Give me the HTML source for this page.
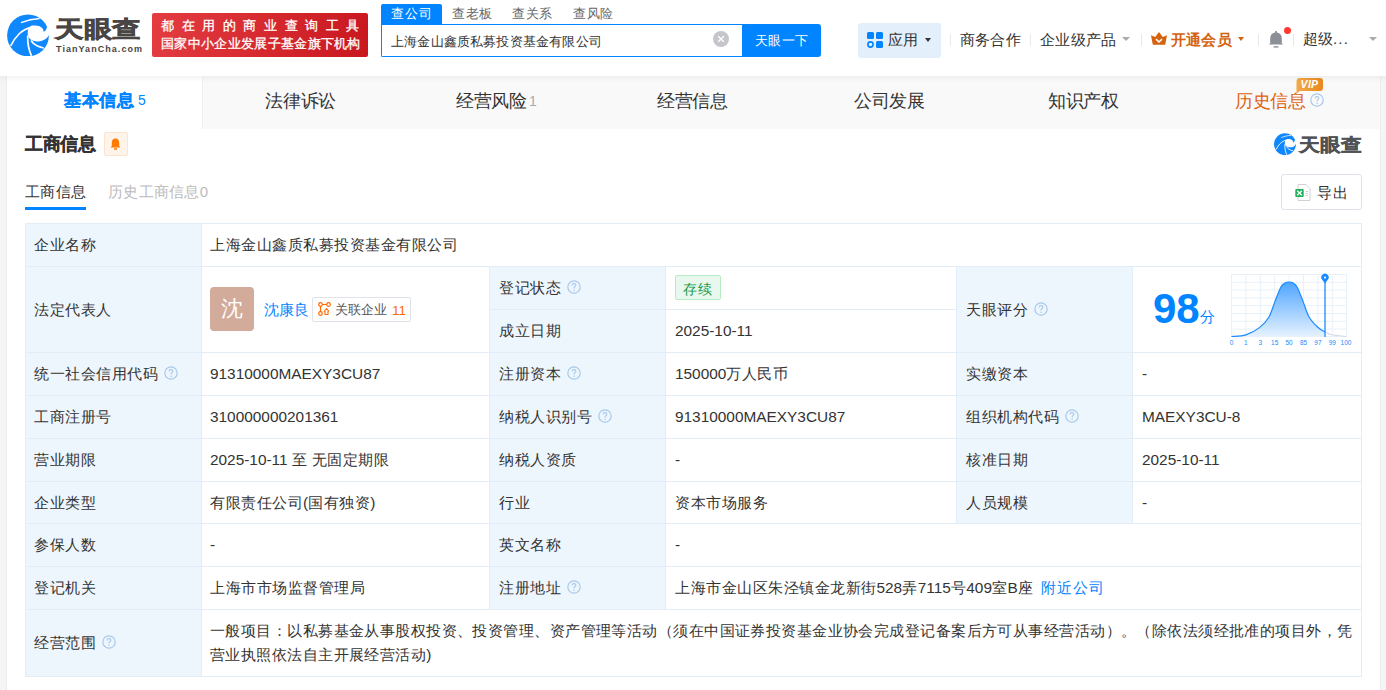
<!DOCTYPE html>
<html><head><meta charset="utf-8">
<style>
*{box-sizing:border-box;margin:0;padding:0}
html,body{width:1386px;height:690px;overflow:hidden;background:#f5f5f5;font-family:"Liberation Sans",sans-serif;color:#333}
.a{position:absolute;white-space:nowrap}
.l{letter-spacing:0}
.t15 .l{font-size:15.4px}
#hdr{position:absolute;left:0;top:0;width:1386px;height:76px;background:#fff;box-shadow:0 2px 5px rgba(0,0,0,.06);z-index:5}
</style></head><body>
<div class="a" style="left:7px;top:76px;width:1373px;height:614px;background:#fff;"></div>
<div class="a" style="left:6px;top:76px;width:1px;height:614px;background:#ececec;"></div>
<div class="a" style="left:1380px;top:76px;width:1px;height:614px;background:#ececec;"></div>
<div class="a" style="left:7px;top:76px;width:1373px;height:53px;background:#f9f9f9;"></div>
<div class="a" style="left:7px;top:76px;width:195px;height:53px;background:#fff;"></div>
<div class="a" style="left:202px;top:76px;width:1px;height:53px;background:#efefef;"></div>
<div class="a" style="left:64px;top:91px;font-size:17px;line-height:20px;color:#0084ff;font-weight:bold;letter-spacing:0.55px;-webkit-text-stroke:0.3px #0084ff">基本信息</div>
<div class="a" style="left:138px;top:90px;font-size:14px;line-height:20px;color:#0084ff;">5</div>
<div class="a" style="left:265px;top:91px;font-size:18px;line-height:20px;color:#333;letter-spacing:-0.2px;">法律诉讼</div>
<div class="a" style="left:456px;top:91px;font-size:18px;line-height:20px;color:#333;letter-spacing:-0.4px;">经营风险</div>
<div class="a" style="left:529px;top:91px;font-size:14px;line-height:20px;color:#aaa;">1</div>
<div class="a" style="left:657px;top:91px;font-size:18px;line-height:20px;color:#333;letter-spacing:-0.4px;">经营信息</div>
<div class="a" style="left:854px;top:91px;font-size:18px;line-height:20px;color:#333;letter-spacing:-0.4px;">公司发展</div>
<div class="a" style="left:1048px;top:91px;font-size:18px;line-height:20px;color:#333;letter-spacing:-0.3px;">知识产权</div>
<div class="a" style="left:1235px;top:91px;font-size:18px;line-height:20px;color:#e0620e;letter-spacing:-0.3px;">历史信息</div>
<svg class="a" style="left:1310px;top:93px" width="14" height="14" viewBox="0 0 14 14"><circle cx="7" cy="7" r="6.2" fill="none" stroke="#a8c9eb" stroke-width="1.2"/><path d="M5.1 5.4 C5.1 4.2 6 3.6 7 3.6 C8.1 3.6 8.9 4.3 8.9 5.3 C8.9 6.5 7.1 6.6 7.1 8 V8.4" fill="none" stroke="#a8c9eb" stroke-width="1.1"/><circle cx="7.1" cy="10.2" r="0.75" fill="#a8c9eb"/></svg>
<svg class="a" style="left:1296px;top:78px" width="28" height="16" viewBox="0 0 28 16"><defs><linearGradient id="vg" x1="0" y1="0" x2="1" y2="0"><stop offset="0" stop-color="#f3aa48"/><stop offset="1" stop-color="#e8881f"/></linearGradient></defs><path d="M3 0 H24 A3 3 0 0 1 27 3 V10 A3 3 0 0 1 24 13 H4 L0.5 15.5 L0.5 3 A3 3 0 0 1 3 0 Z" fill="url(#vg)"/></svg>
<div class="a" style="left:1296px;top:78px;width:27px;font-size:10.5px;line-height:13px;font-weight:bold;font-style:italic;color:#fff;text-align:center;letter-spacing:0.3px">VIP</div>
<div class="a" style="left:25px;top:134px;font-size:18px;line-height:20px;color:#333;font-weight:bold;letter-spacing:-0.3px;-webkit-text-stroke:0.3px #333">工商信息</div>
<div class="a" style="left:104px;top:132px;width:24px;height:24px;background:#fff4ea;border:1px solid #fde4cf;border-radius:2px"></div>
<svg class="a" style="left:110px;top:138px" width="11" height="12" viewBox="0 0 11 12"><path d="M5.5 0.5 C2.8 0.5 1.8 2.5 1.8 5 L1.8 8 L0.5 9.5 L10.5 9.5 L9.2 8 L9.2 5 C9.2 2.5 8.2 0.5 5.5 0.5Z" fill="#ff7a00"/><rect x="4" y="10.2" width="3" height="1.5" fill="#ff7a00"/></svg>
<svg class="a" style="left:1274px;top:133px" width="22" height="22" viewBox="0 0 42 42"><circle cx="21" cy="21.4" r="20.9" fill="#0f87fd"/>
<path d="M21.9 13.3 C23.5 12 25 11.6 26.5 11.6 C29 11.5 31 11.7 32.5 12.3 C34.5 13.2 35.9 14.5 36.3 16 C36.6 16.8 36.6 17.4 36.5 17.8 L38 17.9 L42.2 19.6 L42.2 20.6 C40.8 23 39.6 24.6 37.7 25.6 C35.8 26.7 33.8 27.4 31.6 27.4 C29.6 27.5 27.8 27.3 26.2 26.8 C24.8 26.3 23.9 25.7 23.1 25 C22.2 24.2 21.6 23.4 21.3 22.5 C20.8 21.2 20.6 19.8 20.7 18.3 C20.8 16.5 21.2 14.6 21.9 13.3 Z" fill="#fff"/>
<path d="M14 8.7 C20 6.3 26 4.8 32.6 4.5" stroke="#fff" stroke-width="1.4" fill="none"/>
<path d="M3.7 31.8 C6 27 9 23 12 20 C15.5 16.6 19 14.6 23.2 13.6" stroke="#fff" stroke-width="1.7" fill="none"/>
<path d="M20.7 21.5 C20.6 26 20.9 30 21.6 33 C22.3 36.5 23.2 39 24.5 41.8" stroke="#fff" stroke-width="1.7" fill="none"/>
<path d="M24 26.5 C25.5 28.8 27.5 30.6 30 31.8 C32 32.8 34 33.6 36.8 34" stroke="#fff" stroke-width="1.7" fill="none"/>
<path d="M40.3 12.2 C39.6 14.5 39 16 38 17.1 C37.5 17.6 37 17.9 36.5 18 L42.3 20 L42.3 12.2 Z" fill="#fff"/></svg>
<div class="a" style="left:1299px;top:135px;font-size:18px;line-height:20px;color:#505256;font-weight:bold;-webkit-text-stroke:0.4px #505256;transform:scaleX(1.155);transform-origin:0 0">天眼查</div>
<div class="a" style="left:25px;top:182px;font-size:15px;line-height:20px;color:#333;letter-spacing:0.3px;">工商信息</div>
<div class="a" style="left:25px;top:207px;width:61px;height:3px;background:#0084ff;"></div>
<div class="a" style="left:108px;top:182px;font-size:15px;line-height:20px;color:#bbb;letter-spacing:0.3px;">历史工商信息<span class="l">0</span></div>
<div class="a" style="left:1281px;top:174px;width:81px;height:36px;background:#fff;border:1px solid #dfe3ea;border-radius:3px"></div>
<svg class="a" style="left:1295px;top:184px" width="16" height="17" viewBox="0 0 16 17"><path d="M3 0.5 L11 0.5 L15 4.5 L15 16.5 L3 16.5 Z" fill="#fff" stroke="#cfd3d8"/><rect x="0.3" y="5" width="8.4" height="8" rx="1" fill="#21b05a"/><path d="M2.2 6.8 L6.8 11.2 M6.8 6.8 L2.2 11.2" stroke="#fff" stroke-width="1.3"/><path d="M10.5 7.5h2.5M10.5 9.5h2.5M10.5 11.5h2.5" stroke="#cfd3d8"/></svg>
<div class="a" style="left:1317px;top:183px;font-size:15px;line-height:20px;color:#333;letter-spacing:1px;">导出</div>
<div class="a" style="left:25px;top:223px;width:176px;height:43px;background:#eef6fd;"></div>
<div class="a t15" style="left:34px;top:235px;font-size:15px;line-height:20px;color:#333;letter-spacing:0.5px;">企业名称</div>
<div class="a" style="left:201px;top:223px;width:1160px;height:43px;background:#fff;"></div>
<div class="a t15" style="left:210px;top:235px;font-size:15px;line-height:20px;color:#333;letter-spacing:0.5px;">上海金山鑫质私募投资基金有限公司</div>
<div class="a" style="left:25px;top:266px;width:176px;height:86px;background:#eef6fd;"></div>
<div class="a t15" style="left:34px;top:300px;font-size:15px;line-height:20px;color:#333;letter-spacing:0.5px;">法定代表人</div>
<div class="a" style="left:201px;top:266px;width:288px;height:86px;background:#fff;"></div>
<div class="a" style="left:489px;top:266px;width:176px;height:43px;background:#eef6fd;"></div>
<div class="a t15" style="left:499px;top:278px;font-size:15px;line-height:20px;color:#333;letter-spacing:0.5px;">登记状态</div>
<svg class="a" style="left:567px;top:280px" width="14" height="14" viewBox="0 0 14 14"><circle cx="7" cy="7" r="6.2" fill="none" stroke="#a8c9eb" stroke-width="1.2"/><path d="M5.1 5.4 C5.1 4.2 6 3.6 7 3.6 C8.1 3.6 8.9 4.3 8.9 5.3 C8.9 6.5 7.1 6.6 7.1 8 V8.4" fill="none" stroke="#a8c9eb" stroke-width="1.1"/><circle cx="7.1" cy="10.2" r="0.75" fill="#a8c9eb"/></svg>
<div class="a" style="left:665px;top:266px;width:291px;height:43px;background:#fff;"></div>
<div class="a" style="left:489px;top:309px;width:176px;height:43px;background:#eef6fd;"></div>
<div class="a t15" style="left:499px;top:321px;font-size:15px;line-height:20px;color:#333;letter-spacing:0.5px;">成立日期</div>
<div class="a" style="left:665px;top:309px;width:291px;height:43px;background:#fff;"></div>
<div class="a t15" style="left:675px;top:321px;font-size:15px;line-height:20px;color:#333;letter-spacing:0.5px;"><span class="l">2025-10-11</span></div>
<div class="a" style="left:956px;top:266px;width:176px;height:86px;background:#eef6fd;"></div>
<div class="a t15" style="left:966px;top:300px;font-size:15px;line-height:20px;color:#333;letter-spacing:0.5px;">天眼评分</div>
<svg class="a" style="left:1034px;top:302px" width="14" height="14" viewBox="0 0 14 14"><circle cx="7" cy="7" r="6.2" fill="none" stroke="#a8c9eb" stroke-width="1.2"/><path d="M5.1 5.4 C5.1 4.2 6 3.6 7 3.6 C8.1 3.6 8.9 4.3 8.9 5.3 C8.9 6.5 7.1 6.6 7.1 8 V8.4" fill="none" stroke="#a8c9eb" stroke-width="1.1"/><circle cx="7.1" cy="10.2" r="0.75" fill="#a8c9eb"/></svg>
<div class="a" style="left:1132px;top:266px;width:229px;height:86px;background:#fff;"></div>
<div class="a" style="left:25px;top:352px;width:176px;height:43px;background:#eef6fd;"></div>
<div class="a t15" style="left:34px;top:364px;font-size:15px;line-height:20px;color:#333;letter-spacing:0.5px;">统一社会信用代码</div>
<svg class="a" style="left:164px;top:366px" width="14" height="14" viewBox="0 0 14 14"><circle cx="7" cy="7" r="6.2" fill="none" stroke="#a8c9eb" stroke-width="1.2"/><path d="M5.1 5.4 C5.1 4.2 6 3.6 7 3.6 C8.1 3.6 8.9 4.3 8.9 5.3 C8.9 6.5 7.1 6.6 7.1 8 V8.4" fill="none" stroke="#a8c9eb" stroke-width="1.1"/><circle cx="7.1" cy="10.2" r="0.75" fill="#a8c9eb"/></svg>
<div class="a" style="left:201px;top:352px;width:288px;height:43px;background:#fff;"></div>
<div class="a t15" style="left:210px;top:364px;font-size:15px;line-height:20px;color:#333;letter-spacing:0.5px;"><span class="l">91310000MAEXY3CU87</span></div>
<div class="a" style="left:489px;top:352px;width:176px;height:43px;background:#eef6fd;"></div>
<div class="a t15" style="left:499px;top:364px;font-size:15px;line-height:20px;color:#333;letter-spacing:0.5px;">注册资本</div>
<svg class="a" style="left:567px;top:366px" width="14" height="14" viewBox="0 0 14 14"><circle cx="7" cy="7" r="6.2" fill="none" stroke="#a8c9eb" stroke-width="1.2"/><path d="M5.1 5.4 C5.1 4.2 6 3.6 7 3.6 C8.1 3.6 8.9 4.3 8.9 5.3 C8.9 6.5 7.1 6.6 7.1 8 V8.4" fill="none" stroke="#a8c9eb" stroke-width="1.1"/><circle cx="7.1" cy="10.2" r="0.75" fill="#a8c9eb"/></svg>
<div class="a" style="left:665px;top:352px;width:291px;height:43px;background:#fff;"></div>
<div class="a t15" style="left:675px;top:364px;font-size:15px;line-height:20px;color:#333;letter-spacing:0.5px;"><span class="l">150000</span>万人民币</div>
<div class="a" style="left:956px;top:352px;width:176px;height:43px;background:#eef6fd;"></div>
<div class="a t15" style="left:966px;top:364px;font-size:15px;line-height:20px;color:#333;letter-spacing:0.5px;">实缴资本</div>
<div class="a" style="left:1132px;top:352px;width:229px;height:43px;background:#fff;"></div>
<div class="a t15" style="left:1142px;top:364px;font-size:15px;line-height:20px;color:#333;letter-spacing:0.5px;"><span class="l">-</span></div>
<div class="a" style="left:25px;top:395px;width:176px;height:43px;background:#eef6fd;"></div>
<div class="a t15" style="left:34px;top:407px;font-size:15px;line-height:20px;color:#333;letter-spacing:0.5px;">工商注册号</div>
<div class="a" style="left:201px;top:395px;width:288px;height:43px;background:#fff;"></div>
<div class="a t15" style="left:210px;top:407px;font-size:15px;line-height:20px;color:#333;letter-spacing:0.5px;"><span class="l">310000000201361</span></div>
<div class="a" style="left:489px;top:395px;width:176px;height:43px;background:#eef6fd;"></div>
<div class="a t15" style="left:499px;top:407px;font-size:15px;line-height:20px;color:#333;letter-spacing:0.5px;">纳税人识别号</div>
<svg class="a" style="left:598px;top:409px" width="14" height="14" viewBox="0 0 14 14"><circle cx="7" cy="7" r="6.2" fill="none" stroke="#a8c9eb" stroke-width="1.2"/><path d="M5.1 5.4 C5.1 4.2 6 3.6 7 3.6 C8.1 3.6 8.9 4.3 8.9 5.3 C8.9 6.5 7.1 6.6 7.1 8 V8.4" fill="none" stroke="#a8c9eb" stroke-width="1.1"/><circle cx="7.1" cy="10.2" r="0.75" fill="#a8c9eb"/></svg>
<div class="a" style="left:665px;top:395px;width:291px;height:43px;background:#fff;"></div>
<div class="a t15" style="left:675px;top:407px;font-size:15px;line-height:20px;color:#333;letter-spacing:0.5px;"><span class="l">91310000MAEXY3CU87</span></div>
<div class="a" style="left:956px;top:395px;width:176px;height:43px;background:#eef6fd;"></div>
<div class="a t15" style="left:966px;top:407px;font-size:15px;line-height:20px;color:#333;letter-spacing:0.5px;">组织机构代码</div>
<svg class="a" style="left:1065px;top:409px" width="14" height="14" viewBox="0 0 14 14"><circle cx="7" cy="7" r="6.2" fill="none" stroke="#a8c9eb" stroke-width="1.2"/><path d="M5.1 5.4 C5.1 4.2 6 3.6 7 3.6 C8.1 3.6 8.9 4.3 8.9 5.3 C8.9 6.5 7.1 6.6 7.1 8 V8.4" fill="none" stroke="#a8c9eb" stroke-width="1.1"/><circle cx="7.1" cy="10.2" r="0.75" fill="#a8c9eb"/></svg>
<div class="a" style="left:1132px;top:395px;width:229px;height:43px;background:#fff;"></div>
<div class="a t15" style="left:1142px;top:407px;font-size:15px;line-height:20px;color:#333;letter-spacing:0.5px;"><span class="l">MAEXY3CU-8</span></div>
<div class="a" style="left:25px;top:438px;width:176px;height:43px;background:#eef6fd;"></div>
<div class="a t15" style="left:34px;top:450px;font-size:15px;line-height:20px;color:#333;letter-spacing:0.5px;">营业期限</div>
<div class="a" style="left:201px;top:438px;width:288px;height:43px;background:#fff;"></div>
<div class="a t15" style="left:210px;top:450px;font-size:15px;line-height:20px;color:#333;letter-spacing:0.5px;"><span class="l">2025-10-11 </span>至<span class="l"> </span>无固定期限</div>
<div class="a" style="left:489px;top:438px;width:176px;height:43px;background:#eef6fd;"></div>
<div class="a t15" style="left:499px;top:450px;font-size:15px;line-height:20px;color:#333;letter-spacing:0.5px;">纳税人资质</div>
<div class="a" style="left:665px;top:438px;width:291px;height:43px;background:#fff;"></div>
<div class="a t15" style="left:675px;top:450px;font-size:15px;line-height:20px;color:#333;letter-spacing:0.5px;"><span class="l">-</span></div>
<div class="a" style="left:956px;top:438px;width:176px;height:43px;background:#eef6fd;"></div>
<div class="a t15" style="left:966px;top:450px;font-size:15px;line-height:20px;color:#333;letter-spacing:0.5px;">核准日期</div>
<div class="a" style="left:1132px;top:438px;width:229px;height:43px;background:#fff;"></div>
<div class="a t15" style="left:1142px;top:450px;font-size:15px;line-height:20px;color:#333;letter-spacing:0.5px;"><span class="l">2025-10-11</span></div>
<div class="a" style="left:25px;top:481px;width:176px;height:42px;background:#eef6fd;"></div>
<div class="a t15" style="left:34px;top:493px;font-size:15px;line-height:20px;color:#333;letter-spacing:0.5px;">企业类型</div>
<div class="a" style="left:201px;top:481px;width:288px;height:42px;background:#fff;"></div>
<div class="a t15" style="left:210px;top:493px;font-size:15px;line-height:20px;color:#333;letter-spacing:0.5px;">有限责任公司<span class="l">(</span>国有独资<span class="l">)</span></div>
<div class="a" style="left:489px;top:481px;width:176px;height:42px;background:#eef6fd;"></div>
<div class="a t15" style="left:499px;top:493px;font-size:15px;line-height:20px;color:#333;letter-spacing:0.5px;">行业</div>
<div class="a" style="left:665px;top:481px;width:291px;height:42px;background:#fff;"></div>
<div class="a t15" style="left:675px;top:493px;font-size:15px;line-height:20px;color:#333;letter-spacing:0.5px;">资本市场服务</div>
<div class="a" style="left:956px;top:481px;width:176px;height:42px;background:#eef6fd;"></div>
<div class="a t15" style="left:966px;top:493px;font-size:15px;line-height:20px;color:#333;letter-spacing:0.5px;">人员规模</div>
<div class="a" style="left:1132px;top:481px;width:229px;height:42px;background:#fff;"></div>
<div class="a t15" style="left:1142px;top:493px;font-size:15px;line-height:20px;color:#333;letter-spacing:0.5px;"><span class="l">-</span></div>
<div class="a" style="left:25px;top:523px;width:176px;height:43px;background:#eef6fd;"></div>
<div class="a t15" style="left:34px;top:535px;font-size:15px;line-height:20px;color:#333;letter-spacing:0.5px;">参保人数</div>
<div class="a" style="left:201px;top:523px;width:288px;height:43px;background:#fff;"></div>
<div class="a t15" style="left:210px;top:535px;font-size:15px;line-height:20px;color:#333;letter-spacing:0.5px;"><span class="l">-</span></div>
<div class="a" style="left:489px;top:523px;width:176px;height:43px;background:#eef6fd;"></div>
<div class="a t15" style="left:499px;top:535px;font-size:15px;line-height:20px;color:#333;letter-spacing:0.5px;">英文名称</div>
<div class="a" style="left:665px;top:523px;width:696px;height:43px;background:#fff;"></div>
<div class="a t15" style="left:675px;top:535px;font-size:15px;line-height:20px;color:#333;letter-spacing:0.5px;"><span class="l">-</span></div>
<div class="a" style="left:25px;top:566px;width:176px;height:43px;background:#eef6fd;"></div>
<div class="a t15" style="left:34px;top:578px;font-size:15px;line-height:20px;color:#333;letter-spacing:0.5px;">登记机关</div>
<div class="a" style="left:201px;top:566px;width:288px;height:43px;background:#fff;"></div>
<div class="a t15" style="left:210px;top:578px;font-size:15px;line-height:20px;color:#333;letter-spacing:0.5px;">上海市市场监督管理局</div>
<div class="a" style="left:489px;top:566px;width:176px;height:43px;background:#eef6fd;"></div>
<div class="a t15" style="left:499px;top:578px;font-size:15px;line-height:20px;color:#333;letter-spacing:0.5px;">注册地址</div>
<svg class="a" style="left:567px;top:580px" width="14" height="14" viewBox="0 0 14 14"><circle cx="7" cy="7" r="6.2" fill="none" stroke="#a8c9eb" stroke-width="1.2"/><path d="M5.1 5.4 C5.1 4.2 6 3.6 7 3.6 C8.1 3.6 8.9 4.3 8.9 5.3 C8.9 6.5 7.1 6.6 7.1 8 V8.4" fill="none" stroke="#a8c9eb" stroke-width="1.1"/><circle cx="7.1" cy="10.2" r="0.75" fill="#a8c9eb"/></svg>
<div class="a" style="left:665px;top:566px;width:696px;height:43px;background:#fff;"></div>
<div class="a t15" style="left:675px;top:578px;font-size:15px;line-height:20px;color:#333;letter-spacing:0.5px;">上海市金山区朱泾镇金龙新街<span class="l">528</span>弄<span class="l">7115</span>号<span class="l">409</span>室<span class="l">B</span>座</div>
<div class="a" style="left:1041px;top:578px;font-size:15px;line-height:20px;color:#0084ff;letter-spacing:0.9px;">附近公司</div>
<div class="a" style="left:25px;top:609px;width:176px;height:67px;background:#eef6fd;"></div>
<div class="a t15" style="left:34px;top:633px;font-size:15px;line-height:20px;color:#333;letter-spacing:0.5px;">经营范围</div>
<svg class="a" style="left:102px;top:635px" width="14" height="14" viewBox="0 0 14 14"><circle cx="7" cy="7" r="6.2" fill="none" stroke="#a8c9eb" stroke-width="1.2"/><path d="M5.1 5.4 C5.1 4.2 6 3.6 7 3.6 C8.1 3.6 8.9 4.3 8.9 5.3 C8.9 6.5 7.1 6.6 7.1 8 V8.4" fill="none" stroke="#a8c9eb" stroke-width="1.1"/><circle cx="7.1" cy="10.2" r="0.75" fill="#a8c9eb"/></svg>
<div class="a" style="left:201px;top:609px;width:1160px;height:67px;background:#fff;"></div>
<div class="a t15" style="left:210px;top:621px;font-size:15px;line-height:20px;color:#333;letter-spacing:0.44px;">一般项目：以私募基金从事股权投资、投资管理、资产管理等活动（须在中国证券投资基金业协会完成登记备案后方可从事经营活动）。（除依法须经批准的项目外，凭</div>
<div class="a t15" style="left:210px;top:645px;font-size:15px;line-height:20px;color:#333;letter-spacing:0.44px;">营业执照依法自主开展经营活动<span class="l">)</span></div>
<div class="a" style="left:25px;top:223px;width:1337px;height:1px;background:#e2edf7;"></div>
<div class="a" style="left:25px;top:266px;width:1337px;height:1px;background:#e2edf7;"></div>
<div class="a" style="left:489px;top:309px;width:468px;height:1px;background:#e2edf7;"></div>
<div class="a" style="left:25px;top:352px;width:1337px;height:1px;background:#e2edf7;"></div>
<div class="a" style="left:25px;top:395px;width:1337px;height:1px;background:#e2edf7;"></div>
<div class="a" style="left:25px;top:438px;width:1337px;height:1px;background:#e2edf7;"></div>
<div class="a" style="left:25px;top:481px;width:1337px;height:1px;background:#e2edf7;"></div>
<div class="a" style="left:25px;top:523px;width:1337px;height:1px;background:#e2edf7;"></div>
<div class="a" style="left:25px;top:566px;width:1337px;height:1px;background:#e2edf7;"></div>
<div class="a" style="left:25px;top:609px;width:1337px;height:1px;background:#e2edf7;"></div>
<div class="a" style="left:25px;top:676px;width:1337px;height:1px;background:#e2edf7;"></div>
<div class="a" style="left:25px;top:223px;width:1px;height:454px;background:#e2edf7;"></div>
<div class="a" style="left:1361px;top:223px;width:1px;height:454px;background:#e2edf7;"></div>
<div class="a" style="left:201px;top:223px;width:1px;height:454px;background:#e2edf7;"></div>
<div class="a" style="left:489px;top:266px;width:1px;height:344px;background:#e2edf7;"></div>
<div class="a" style="left:665px;top:266px;width:1px;height:344px;background:#e2edf7;"></div>
<div class="a" style="left:956px;top:266px;width:1px;height:258px;background:#e2edf7;"></div>
<div class="a" style="left:1132px;top:266px;width:1px;height:258px;background:#e2edf7;"></div>
<div class="a" style="left:210px;top:287px;width:44px;height:44px;border-radius:4px;background:#d3ab9b"></div>
<div class="a" style="left:221px;top:299px;font-size:22px;line-height:20px;color:#fff;">沈</div>
<div class="a" style="left:264px;top:300px;font-size:15px;line-height:20px;color:#0084ff;letter-spacing:0.1px;">沈康良</div>
<div class="a" style="left:312px;top:297px;width:99px;height:25px;background:#fff;border:1px solid #dfe3ea;border-radius:2px"></div>
<svg class="a" style="left:318px;top:302px" width="13" height="14" viewBox="0 0 13 14"><circle cx="2.5" cy="2.5" r="1.8" stroke="#ff6a00" stroke-width="1.2" fill="none"/><circle cx="10.5" cy="2.5" r="1.8" stroke="#ff6a00" stroke-width="1.2" fill="none"/><circle cx="2.5" cy="11.5" r="1.8" stroke="#ff6a00" stroke-width="1.2" fill="none"/><path d="M4.3 2.5H8.7M2.5 4.3V9.7" stroke="#ff6a00" stroke-width="1.2"/><path d="M6 9.5 L8.5 6.5 L11 9.5 M7 9 V12.5 H10 V9" stroke="#ff6a00" stroke-width="1.1" fill="none"/></svg>
<div class="a" style="left:335px;top:300px;font-size:13px;line-height:20px;color:#555;">关联企业</div>
<div class="a" style="left:392px;top:301px;font-size:13px;line-height:20px;color:#ff6a00;font-size:13.5px">11</div>
<div class="a" style="left:675px;top:275px;width:46px;height:25px;background:#e8f8ee;border:1px solid #b7ebc6;border-radius:2px"></div>
<div class="a" style="left:683px;top:279px;font-size:14px;line-height:20px;color:#169a47;letter-spacing:0.8px;">存续</div>
<div class="a" style="left:1153px;top:287px;font-size:42px;font-weight:bold;line-height:44px;color:#0084ff">98</div>
<div class="a" style="left:1200px;top:307px;font-size:15px;line-height:20px;color:#0084ff;">分</div>
<svg class="a" style="left:1228px;top:270px" width="126" height="78" viewBox="0 0 126 78">
<defs><linearGradient id="g" x1="0" y1="0" x2="0" y2="1"><stop offset="0" stop-color="#4ea5ff"/><stop offset="1" stop-color="#e6f2ff"/></linearGradient></defs>
<g stroke="#e8f1fa" stroke-width="1">
<path d="M3.5 4.5V66.5M17.9 4.5V66.5M32.3 4.5V66.5M46.7 4.5V66.5M61.1 4.5V66.5M75.5 4.5V66.5M89.9 4.5V66.5M104.3 4.5V66.5M118.5 4.5V66.5"/>
<path d="M3.5 4.5H118.5M3.5 12.3H118.5M3.5 20.1H118.5M3.5 27.9H118.5M3.5 35.7H118.5M3.5 43.5H118.5M3.5 51.3H118.5M3.5 59.1H118.5M3.5 66.5H118.5"/>
</g>
<path d="M3.4 66.5 C5.82 66.23 13.17 66.42 17.9 64.9 C22.63 63.38 27.93 60.43 31.8 57.4 C35.67 54.37 38.58 51.00 41.1 46.7 C43.62 42.40 44.97 36.47 46.9 31.6 C48.83 26.73 51.02 20.60 52.7 17.5 C54.38 14.40 55.62 13.92 57 13 C58.38 12.08 59.67 12.00 61 12.0 C62.33 12.00 63.62 12.08 65 13 C66.38 13.92 67.62 14.40 69.3 17.5 C70.98 20.60 73.17 26.73 75.1 31.6 C77.03 36.47 78.45 42.42 80.9 46.7 C83.35 50.98 87.12 54.75 89.8 57.3 C92.48 59.85 95.80 61.22 97 62.0 L97 66.5 L3.4 66.5 Z" fill="url(#g)"/>
<path d="M3.4 66.5 C5.82 66.23 13.17 66.42 17.9 64.9 C22.63 63.38 27.93 60.43 31.8 57.4 C35.67 54.37 38.58 51.00 41.1 46.7 C43.62 42.40 44.97 36.47 46.9 31.6 C48.83 26.73 51.02 20.60 52.7 17.5 C54.38 14.40 55.62 13.92 57 13 C58.38 12.08 59.67 12.00 61 12.0 C62.33 12.00 63.62 12.08 65 13 C66.38 13.92 67.62 14.40 69.3 17.5 C70.98 20.60 73.17 26.73 75.1 31.6 C77.03 36.47 78.45 42.42 80.9 46.7 C83.35 50.98 87.12 54.75 89.8 57.3 C92.48 59.85 95.80 61.22 97 62.0" stroke="#1a8bff" stroke-width="1.2" fill="none"/>
<path d="M97 62.0 C98.12 62.47 100.17 64.05 103.7 64.8 C107.23 65.55 115.78 66.22 118.2 66.5" stroke="#d5dbe3" stroke-width="1.1" fill="none"/>
<path d="M97 67 V10" stroke="#1a8bff" stroke-width="1.3"/>
<path d="M97 13.5 L94.2 9.8 A3.7 3.7 0 1 1 99.8 9.8 Z" fill="#1a8bff"/><circle cx="97" cy="7.6" r="1.0" fill="#fff"/>
<g font-size="6.5" fill="#1a8bff" font-family="Liberation Sans" text-anchor="middle">
<text x="3.5" y="75">0</text><text x="17.9" y="75">1</text><text x="32.3" y="75">3</text><text x="46.7" y="75">15</text><text x="61.1" y="75">50</text><text x="75.5" y="75">85</text><text x="89.9" y="75">97</text><text x="104.3" y="75">99</text><text x="118" y="75">100</text>
</g></svg>
<div id="hdr">
<svg class="a" style="left:7px;top:14px" width="42" height="42" viewBox="0 0 42 42"><circle cx="21" cy="21.4" r="20.9" fill="#0f87fd"/>
<path d="M21.9 13.3 C23.5 12 25 11.6 26.5 11.6 C29 11.5 31 11.7 32.5 12.3 C34.5 13.2 35.9 14.5 36.3 16 C36.6 16.8 36.6 17.4 36.5 17.8 L38 17.9 L42.2 19.6 L42.2 20.6 C40.8 23 39.6 24.6 37.7 25.6 C35.8 26.7 33.8 27.4 31.6 27.4 C29.6 27.5 27.8 27.3 26.2 26.8 C24.8 26.3 23.9 25.7 23.1 25 C22.2 24.2 21.6 23.4 21.3 22.5 C20.8 21.2 20.6 19.8 20.7 18.3 C20.8 16.5 21.2 14.6 21.9 13.3 Z" fill="#fff"/>
<path d="M14 8.7 C20 6.3 26 4.8 32.6 4.5" stroke="#fff" stroke-width="1.4" fill="none"/>
<path d="M3.7 31.8 C6 27 9 23 12 20 C15.5 16.6 19 14.6 23.2 13.6" stroke="#fff" stroke-width="1.7" fill="none"/>
<path d="M20.7 21.5 C20.6 26 20.9 30 21.6 33 C22.3 36.5 23.2 39 24.5 41.8" stroke="#fff" stroke-width="1.7" fill="none"/>
<path d="M24 26.5 C25.5 28.8 27.5 30.6 30 31.8 C32 32.8 34 33.6 36.8 34" stroke="#fff" stroke-width="1.7" fill="none"/>
<path d="M40.3 12.2 C39.6 14.5 39 16 38 17.1 C37.5 17.6 37 17.9 36.5 18 L42.3 20 L42.3 12.2 Z" fill="#fff"/></svg>
<div class="a" style="left:55px;top:19px;font-size:23px;line-height:20px;color:#4a4545;font-weight:bold;font-weight:900;-webkit-text-stroke:0.6px #4a4545;transform:scaleX(1.24);transform-origin:0 0">天眼查</div>
<div class="a" style="left:56px;top:43px;font-size:9px;line-height:12px;font-weight:bold;color:#4a4545;letter-spacing:1.05px">TianYanCha.com</div>
<div class="a" style="left:152px;top:13px;width:216px;height:44px;background:linear-gradient(100deg,#e33d41,#c9171f);border-radius:2px"></div>
<div class="a" style="left:161px;top:16px;font-size:13px;line-height:20px;color:#fff;letter-spacing:7.6px;-webkit-text-stroke:0.3px #fff">都在用的商业查询工具</div>
<div class="a" style="left:161px;top:34px;font-size:13px;line-height:20px;color:#fff;letter-spacing:0.32px;-webkit-text-stroke:0.3px #fff">国家中小企业发展子基金旗下机构</div>
<div class="a" style="left:381px;top:4px;width:61px;height:21px;background:#0084ff;border-radius:2px 2px 0 0"></div>
<div class="a" style="left:391px;top:4px;font-size:13px;line-height:20px;color:#fff;letter-spacing:0.8px;">查公司</div>
<div class="a" style="left:452px;top:4px;font-size:13px;line-height:20px;color:#666;letter-spacing:0.5px;">查老板</div>
<div class="a" style="left:512px;top:4px;font-size:13px;line-height:20px;color:#666;letter-spacing:0.5px;">查关系</div>
<div class="a" style="left:573px;top:4px;font-size:13px;line-height:20px;color:#666;letter-spacing:0.5px;">查风险</div>
<div class="a" style="left:381px;top:24px;width:362px;height:33px;background:#fff;border:1px solid #0084ff;border-right:none;border-radius:0 0 0 2px"></div>
<div class="a" style="left:391px;top:32px;font-size:13px;line-height:20px;color:#333;letter-spacing:0.18px;">上海金山鑫质私募投资基金有限公司</div>
<svg class="a" style="left:713px;top:31px" width="16" height="16" viewBox="0 0 16 16"><circle cx="8" cy="8" r="8" fill="#c4c6cc"/><path d="M5.2 5.2L10.8 10.8M10.8 5.2L5.2 10.8" stroke="#fff" stroke-width="1.4"/></svg>
<div class="a" style="left:742px;top:24px;width:79px;height:33px;background:#0084ff;border-radius:0 3px 3px 0"></div>
<div class="a" style="left:755px;top:31px;font-size:13px;line-height:20px;color:#fff;letter-spacing:0.4px;">天眼一下</div>
<div class="a" style="left:858px;top:23px;width:83px;height:35px;background:#e4effc;border-radius:3px"></div>
<svg class="a" style="left:867px;top:32px" width="16" height="16" viewBox="0 0 16 16"><rect x="0" y="0" width="7" height="7" rx="1.5" fill="#0084ff"/><rect x="9" y="0" width="7" height="7" rx="1.5" fill="#0084ff"/><circle cx="3.5" cy="12.5" r="2.6" stroke="#0084ff" stroke-width="1.6" fill="none"/><rect x="9" y="9" width="7" height="7" rx="1.5" fill="#0084ff"/></svg>
<div class="a" style="left:888px;top:30px;font-size:15px;line-height:20px;color:#333;">应用</div>
<div class="a" style="left:925px;top:38px;width:0;height:0;border-left:3.5px solid transparent;border-right:3.5px solid transparent;border-top:4px solid #333"></div>
<div class="a" style="left:950px;top:34px;width:1px;height:12px;background:#e6eaf0;"></div>
<div class="a" style="left:960px;top:30px;font-size:15px;line-height:20px;color:#333;letter-spacing:0.23px;">商务合作</div>
<div class="a" style="left:1030px;top:34px;width:1px;height:12px;background:#e6eaf0;"></div>
<div class="a" style="left:1040px;top:30px;font-size:15px;line-height:20px;color:#333;letter-spacing:0.25px;">企业级产品</div>
<div class="a" style="left:1122px;top:37px;width:0;height:0;border-left:4.0px solid transparent;border-right:4.0px solid transparent;border-top:4px solid #aaa"></div>
<div class="a" style="left:1141px;top:34px;width:1px;height:12px;background:#e6eaf0;"></div>
<svg class="a" style="left:1151px;top:32px" width="16" height="13" viewBox="0 0 16 13"><path d="M0 3.2 L4.2 5 L8 0 L11.8 5 L16 3.2 L14.2 12.8 L1.8 12.8 Z" fill="#d4620e"/><path d="M5 7.2 L8 10 L11 7.2" stroke="#fff" stroke-width="1.6" fill="none"/></svg>
<div class="a" style="left:1171px;top:30px;font-size:15px;line-height:20px;color:#d4620e;font-weight:bold;letter-spacing:0.2px;">开通会员</div>
<div class="a" style="left:1238px;top:37px;width:0;height:0;border-left:3.5px solid transparent;border-right:3.5px solid transparent;border-top:4px solid #d4620e"></div>
<div class="a" style="left:1258px;top:34px;width:1px;height:12px;background:#e6eaf0;"></div>
<svg class="a" style="left:1268px;top:30px" width="16" height="19" viewBox="0 0 16 19"><rect x="7.2" y="1" width="1.6" height="2" fill="#8b8f97"/><path d="M8 2.6 C4.5 2.6 2.2 4.8 2.2 8.5 L2.2 13.3 L0.8 14.6 L15.2 14.6 L13.8 13.3 L13.8 8.5 C13.8 4.8 11.5 2.6 8 2.6Z" fill="#8b8f97"/><rect x="5.6" y="16.2" width="4.8" height="1.4" fill="#8b8f97"/></svg>
<div class="a" style="left:1284px;top:27px;width:7px;height:7px;background:#ff3a33;border-radius:50%"></div>
<div class="a" style="left:1293px;top:34px;width:1px;height:12px;background:#e6eaf0;"></div>
<div class="a" style="left:1303px;top:29px;font-size:15px;line-height:20px;color:#333;">超级<span style="letter-spacing:1.2px">...</span></div>
<div class="a" style="left:1369px;top:37px;width:0;height:0;border-left:4.0px solid transparent;border-right:4.0px solid transparent;border-top:4px solid #aaa"></div>
</div>
</body></html>
